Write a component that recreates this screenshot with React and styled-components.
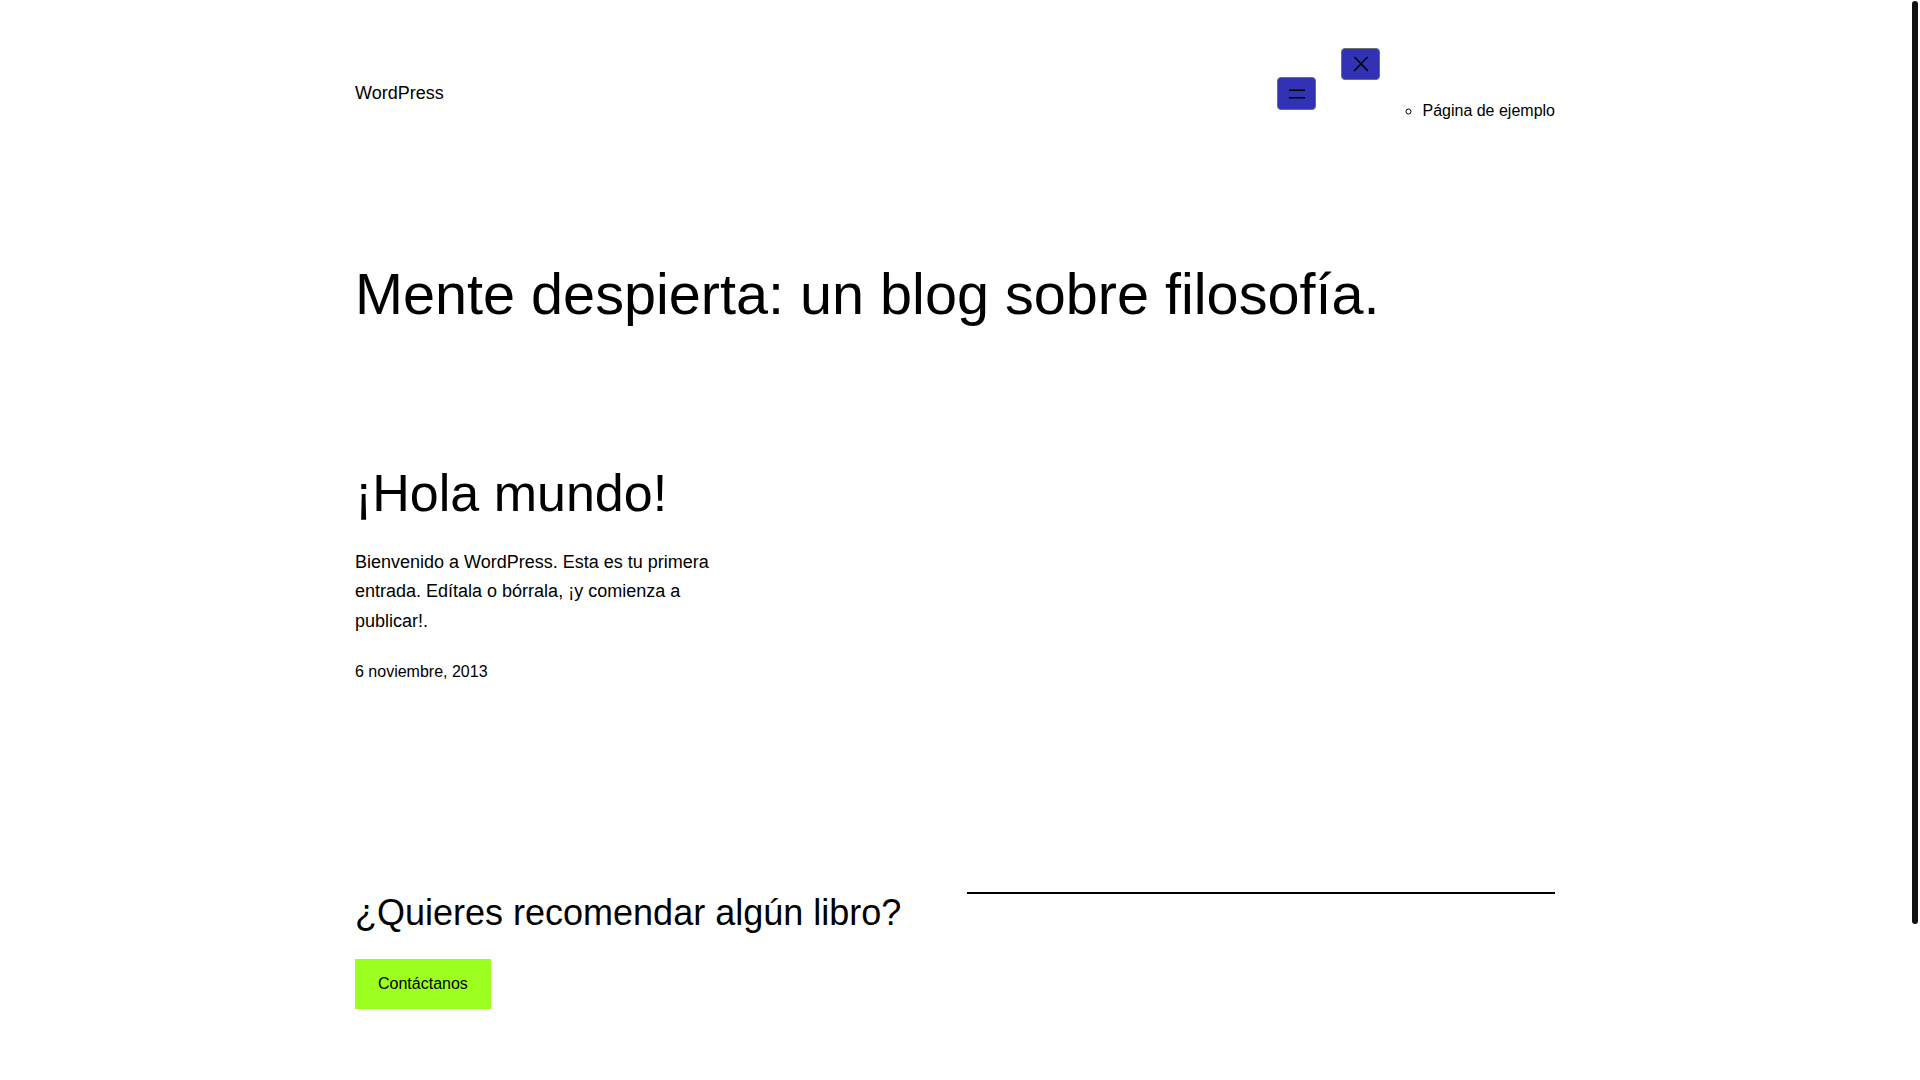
import React from 'react'
import styled, { createGlobalStyle } from 'styled-components'

const GlobalStyle = createGlobalStyle`
  html, body {
    margin: 0;
    padding: 0;
    background: #fff;
  }
  body {
    font-family: "Liberation Sans", Arial, sans-serif;
    color: #000;
    padding-right: 10px;
  }
`

// the page scrolls; the browser's thin scrollbar thumb sits over the right edge
const ScrollThumb = styled.div`
  position: fixed;
  top: 1px;
  right: 2px;
  width: 6px;
  height: 923px;
  border-radius: 3px;
  background: #111;
`

const Page = styled.div`
  max-width: 1200px;
  margin: 0 auto;
  padding: 48px 0 251px;
`

const Header = styled.header`
  display: flex;
  justify-content: space-between;
  align-items: center;
`

const SiteTitle = styled.p`
  margin: 0;
  font-size: 18px;
  line-height: 1.6;
`

const Nav = styled.nav`
  display: flex;
  align-items: center;
  gap: 25px;
`

const NavButton = styled.button`
  box-sizing: border-box;
  width: 39px;
  height: ${p => p.$h}px;
  padding: 0;
  display: flex;
  align-items: center;
  justify-content: center;
  background: #3232b4;
  border: 1px solid #6c6c7a;
  border-radius: 4px;
  color: #000;
  cursor: pointer;

  svg {
    width: 24px;
    height: 24px;
    fill: currentColor;
  }
`

const Overlay = styled.div`
  display: flex;
  flex-direction: column;
  align-items: flex-start;
`

const Menu = styled.ul`
  margin: 18px 0 16px;
  padding-left: 40px;
  list-style: none;
`

const SubMenu = styled.ul`
  margin: 0;
  padding-left: 41px;
  list-style: circle;
`

const MenuItem = styled.li`
  font-size: 16px;
  line-height: 1.6;
`

const BlogTitle = styled.h1`
  margin: 120px 0 0;
  font-size: 57.6px;
  font-weight: 400;
  line-height: 1.2;
`

const PostGrid = styled.section`
  display: grid;
  grid-template-columns: repeat(3, 1fr);
  gap: 24px;
  margin-top: 133px;
`

const Post = styled.article``

const PostTitle = styled.h2`
  margin: 0;
  font-size: 52px;
  font-weight: 400;
  line-height: 1.2;
`

const Excerpt = styled.p`
  margin: 24px 0 0;
  font-size: 18px;
  line-height: 29.3px;
`

const PostDate = styled.time`
  display: block;
  margin-top: 23px;
  font-size: 16px;
  line-height: 1.6;
`

const Footer = styled.footer`
  display: grid;
  grid-template-columns: 1fr 1fr;
  gap: 24px;
  margin-top: 206px;
`

const FooterHeading = styled.h2`
  margin: 0;
  font-size: 36px;
  font-weight: 400;
  line-height: 1.2;
`

const CtaButton = styled.a`
  display: inline-block;
  margin-top: 25px;
  padding: 12.5px 23px;
  background: #9dff20;
  color: #000;
  font-size: 16px;
  line-height: 25px;
  text-decoration: none;
`

const Separator = styled.hr`
  margin: 1px 0 0;
  border: none;
  border-top: 2px solid #000;
`

const MenuIcon = () => (
  <svg viewBox="0 0 24 24" aria-hidden="true">
    <rect x="4" y="7.5" width="16" height="1.5" />
    <rect x="4" y="15" width="16" height="1.5" />
  </svg>
)

const CloseIcon = () => (
  <svg viewBox="0 0 24 24" aria-hidden="true">
    <path d="M13 11.8l6.1-6.3-1-1-6.1 6.2-6.1-6.2-1 1 6.1 6.3-6.5 6.7 1 1 6.5-6.6 6.5 6.6 1-1z" />
  </svg>
)

const App = () => {
  return (
    <>
      <GlobalStyle />
      <Page>
        <Header>
          <SiteTitle>WordPress</SiteTitle>
          <Nav>
            <NavButton $h={33} aria-label="Abrir menú"><MenuIcon /></NavButton>
            <Overlay>
              <NavButton $h={32} aria-label="Cerrar menú"><CloseIcon /></NavButton>
              <Menu>
                <li>
                  <SubMenu>
                    <MenuItem>Página de ejemplo</MenuItem>
                  </SubMenu>
                </li>
              </Menu>
            </Overlay>
          </Nav>
        </Header>

        <BlogTitle>Mente despierta: un blog sobre filosofía.</BlogTitle>

        <PostGrid>
          <Post>
            <PostTitle>¡Hola mundo!</PostTitle>
            <Excerpt>
              Bienvenido a WordPress. Esta es tu primera entrada. Edítala o bórrala, ¡y comienza a publicar!.
            </Excerpt>
            <PostDate>6 noviembre, 2013</PostDate>
          </Post>
        </PostGrid>

        <Footer>
          <div>
            <FooterHeading>¿Quieres recomendar algún libro?</FooterHeading>
            <CtaButton href="#">Contáctanos</CtaButton>
          </div>
          <div>
            <Separator />
          </div>
        </Footer>
      </Page>
      <ScrollThumb />
    </>
  )
}

export default App
